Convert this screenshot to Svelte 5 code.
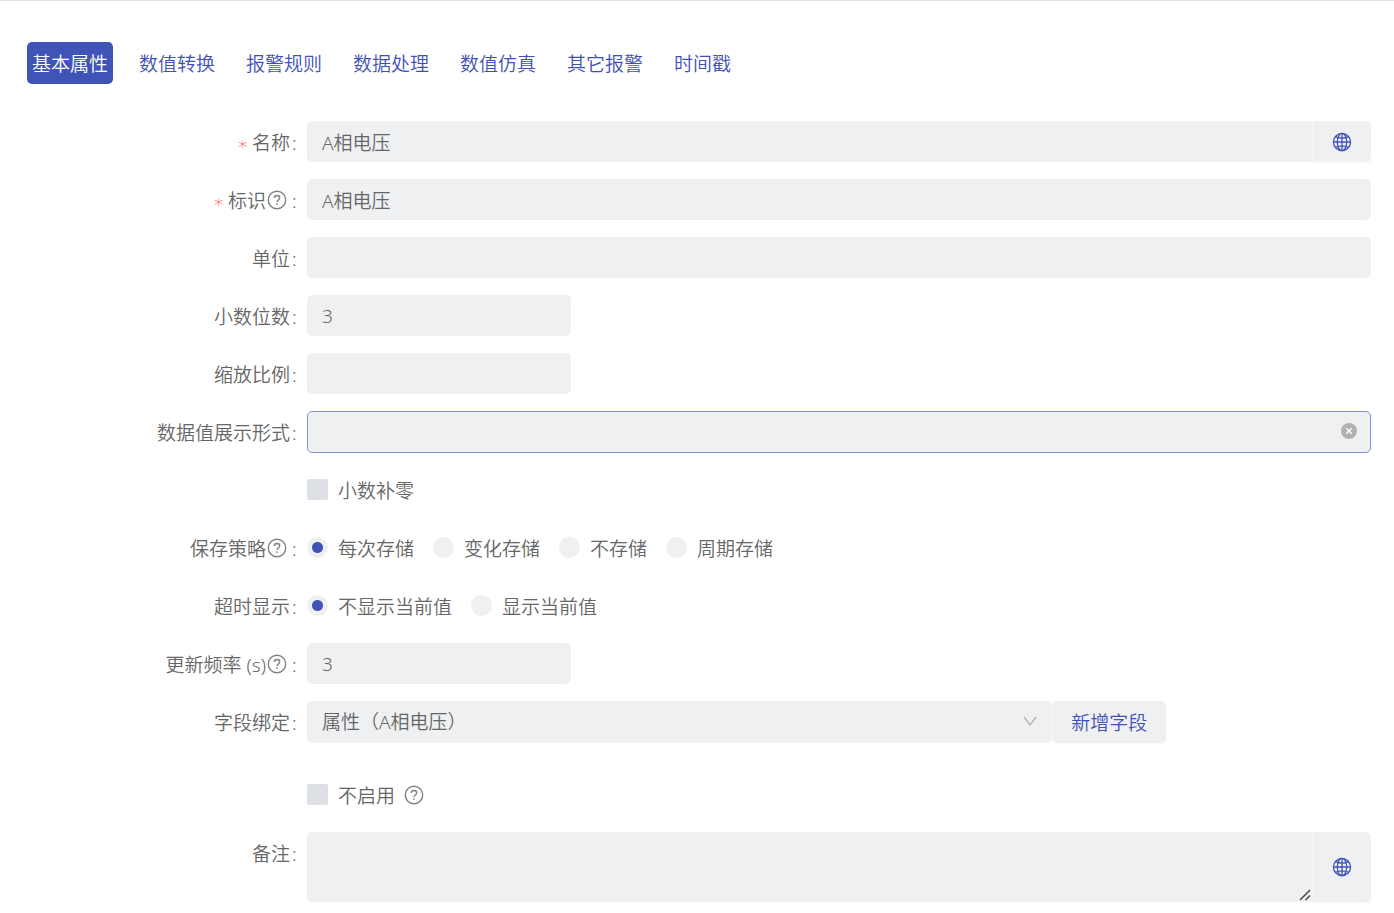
<script>
  const tabs = ['基本属性', '数值转换', '报警规则', '数据处理', '数值仿真', '其它报警', '时间戳'];
  const policies = ['每次存储', '变化存储', '不存储', '周期存储'];
  const timeouts = ['不显示当前值', '显示当前值'];

  let active = $state(0);
  let policy = $state(policies[0]);
  let timeout = $state(timeouts[0]);
  let name = $state('A相电压');
  let ident = $state('A相电压');
  let unit = $state('');
  let decimals = $state('3');
  let scale = $state('');
  let format = $state('');
  let rate = $state('3');
  let field = $state('A');
  let padZero = $state(false);
  let disabled = $state(false);
  let remark = $state('');
</script>

{#snippet help()}
  <svg class="help" viewBox="0 0 20 20" aria-hidden="true">
    <circle cx="10" cy="10" r="8.7" />
    <path d="M7.3 8.1C7.3 6.5 8.5 5.5 10 5.5s2.7 1 2.7 2.5c0 2-2.7 2.1-2.7 4" />
    <circle class="dot" cx="10" cy="14.1" r="0.9" />
  </svg>
{/snippet}

{#snippet globe()}
  <svg class="globe" viewBox="0 0 20 20" aria-hidden="true">
    <circle cx="10" cy="10" r="8.6" />
    <ellipse cx="10" cy="10" rx="4.7" ry="8.6" />
    <path d="M10 1.4v17.2M1.4 10h17.2M3.6 4.6c3.6 2 9.2 2 12.8 0M3.6 15.4c3.6-2 9.2-2 12.8 0" />
  </svg>
{/snippet}

<main>
  <nav>
    {#each tabs as tab, i}
      <button type="button" class="tab" class:active={active === i} onclick={() => (active = i)}>{tab}</button>
    {/each}
  </nav>

  <form>
    <div class="row">
      <label class="label required" for="name">名称</label>
      <div class="group">
        <input class="box joined" id="name" type="text" bind:value={name} />
        <button type="button" class="addon" aria-label="多语言">{@render globe()}</button>
      </div>
    </div>

    <div class="row">
      <label class="label required" for="ident">标识{@render help()}</label>
      <input class="box" id="ident" type="text" bind:value={ident} />
    </div>

    <div class="row">
      <label class="label" for="unit">单位</label>
      <input class="box" id="unit" type="text" bind:value={unit} />
    </div>

    <div class="row">
      <label class="label" for="decimals">小数位数</label>
      <input class="box short" id="decimals" type="text" bind:value={decimals} />
    </div>

    <div class="row">
      <label class="label" for="scale">缩放比例</label>
      <input class="box short" id="scale" type="text" bind:value={scale} />
    </div>

    <div class="row">
      <label class="label" for="format">数据值展示形式</label>
      <div class="wrap">
        <input class="box focused" id="format" type="text" bind:value={format} />
        <button type="button" class="clear" aria-label="清除" onclick={() => (format = '')}>
          <svg viewBox="0 0 16 16" aria-hidden="true">
            <circle cx="8" cy="8" r="8" />
            <path d="M5.3 5.3l5.4 5.4M10.7 5.3l-5.4 5.4" />
          </svg>
        </button>
      </div>
    </div>

    <div class="row">
      <label class="choice alone"><input type="checkbox" bind:checked={padZero} />小数补零</label>
    </div>

    <div class="row">
      <span class="label" id="policy">保存策略{@render help()}</span>
      <div class="choices" role="radiogroup" aria-labelledby="policy">
        {#each policies as item}
          <label class="choice"><input type="radio" name="policy" value={item} bind:group={policy} />{item}</label>
        {/each}
      </div>
    </div>

    <div class="row">
      <span class="label" id="timeout">超时显示</span>
      <div class="choices" role="radiogroup" aria-labelledby="timeout">
        {#each timeouts as item}
          <label class="choice"><input type="radio" name="timeout" value={item} bind:group={timeout} />{item}</label>
        {/each}
      </div>
    </div>

    <div class="row">
      <label class="label" for="rate">更新频率 (s){@render help()}</label>
      <input class="box short" id="rate" type="text" bind:value={rate} />
    </div>

    <div class="row binding">
      <label class="label" for="field">字段绑定</label>
      <div class="group">
        <div class="wrap select">
          <select class="box" id="field" bind:value={field}>
            <option value="A">属性（A相电压）</option>
          </select>
          <svg class="chevron" viewBox="0 0 14 10" aria-hidden="true"><path d="M1 1l6 8 6-8" /></svg>
        </div>
        <button type="button" class="addon add">新增字段</button>
      </div>
    </div>

    <div class="row">
      <label class="choice alone"><input type="checkbox" bind:checked={disabled} />不启用<span class="after">{@render help()}</span></label>
    </div>

    <div class="row top">
      <label class="label" for="remark">备注</label>
      <div class="group">
        <div class="wrap area">
          <textarea class="box joined" id="remark" bind:value={remark}></textarea>
          <svg class="grip" viewBox="0 0 12 12" aria-hidden="true"><path d="M1 11L11 1M6.5 11L11 6.5" /></svg>
        </div>
        <button type="button" class="addon" aria-label="多语言">{@render globe()}</button>
      </div>
    </div>
  </form>
</main>

<style>
  :global(body) {
    background: #fff;
  }

  main,
  button,
  input,
  select,
  textarea {
    font-family: 'Noto Sans', 'Noto Sans CJK SC', sans-serif;
    font-size: 19px;
    font-weight: 350;
    color: #666;
    box-sizing: border-box;
  }

  main {
    border-top: 1px solid #e0e0e0;
    padding: 41px 23px 10px 27px;
    line-height: 28px;
  }

  button {
    border: 0;
    padding: 0;
    background: none;
    cursor: pointer;
  }

  nav {
    display: flex;
    gap: 21px;
    margin-bottom: 37px;
  }

  .tab {
    height: 42px;
    padding: 0 5px;
    border-radius: 5px;
    color: #3f51b5;
    white-space: nowrap;
  }

  .tab.active {
    background: #4054b8;
    color: #fff;
  }

  form {
    display: flex;
    flex-direction: column;
    gap: 16px;
  }

  .row {
    display: grid;
    grid-template-columns: 5fr 19fr;
    min-height: 42px;
  }

  .binding {
    margin-bottom: 15px;
  }

  .label {
    display: flex;
    align-items: center;
    justify-content: flex-end;
    box-sizing: border-box;
    height: 42px;
    padding-top: 2px;
    white-space: pre;
  }

  .label::after {
    content: ':';
    width: 15px;
    margin-left: 2px;
  }

  .required::before {
    content: '∗';
    margin-right: 3px;
    color: #ff4d4f;
    font-family: 'DejaVu Sans', sans-serif;
    font-size: 19px;
  }

  .box {
    width: 100%;
    min-width: 0;
    height: 41px;
    margin: 0;
    padding: 0 15px;
    border: 0;
    border-radius: 5px;
    outline: 0;
    background: #eff0f2;
  }

  .short {
    width: 264px;
  }

  .focused {
    height: 42px;
    border: 1px solid #8190d6;
  }

  .joined {
    flex: 1;
    border-radius: 5px 0 0 5px;
  }

  .group {
    display: flex;
  }

  .wrap {
    position: relative;
  }

  .select {
    width: 70%;
  }

  .area {
    flex: 1;
  }

  select.box {
    height: 42px;
    appearance: none;
  }

  .chevron {
    position: absolute;
    top: 15px;
    right: 15px;
    width: 14px;
    height: 10px;
    fill: none;
    stroke: #b5b7b9;
    stroke-width: 1.5;
    pointer-events: none;
  }

  .clear {
    position: absolute;
    top: 12px;
    right: 14px;
    width: 16px;
    height: 16px;
  }

  .clear svg {
    display: block;
    fill: #b0b1b3;
    stroke: #fff;
    stroke-width: 1.4;
  }

  .clear circle {
    stroke: none;
  }

  .addon {
    display: flex;
    align-items: center;
    justify-content: center;
    width: 59px;
    height: 41px;
    border-left: 1px solid #f4f5f6;
    border-radius: 0 5px 5px 0;
    background: #eff0f2;
    box-shadow: 0 1px 2px rgba(0, 0, 0, 0.03);
    color: #3f51b5;
  }

  .add {
    width: 114px;
    height: 42px;
    border-radius: 5px;
  }

  .globe {
    width: 20px;
    height: 20px;
    fill: none;
    stroke: #4054b8;
    stroke-width: 1.3;
  }

  .help {
    flex: none;
    width: 20px;
    height: 20px;
    margin: 0 3px 2px 1px;
    fill: none;
    stroke: #808080;
    stroke-width: 1.4;
  }

  .help .dot {
    fill: #808080;
    stroke: none;
  }

  .choices {
    display: flex;
    gap: 19px;
  }

  .choice {
    display: flex;
    align-items: center;
    box-sizing: border-box;
    height: 42px;
    padding-top: 2px;
    white-space: nowrap;
  }

  .alone {
    grid-column: 2;
    justify-self: start;
  }

  .choice input {
    appearance: none;
    width: 21px;
    height: 21px;
    margin: 0 10px 4px 0;
    border-radius: 2px;
    background: #dde1e5;
  }

  .choice input[type='checkbox']:checked {
    background: #4054b8;
  }

  .choice input[type='radio'] {
    border-radius: 50%;
    background: #eff0f2;
  }

  .choice input[type='radio']:checked {
    background: radial-gradient(circle, #4054b8 5px, #eff0f2 6px);
  }

  .after {
    display: flex;
    margin-left: 8px;
  }

  .top .box,
  .top .addon {
    height: 70px;
  }

  textarea.box {
    display: block;
    padding: 8px 15px;
    resize: vertical;
  }

  textarea.box::-webkit-resizer {
    background: transparent;
  }

  .grip {
    position: absolute;
    right: 1px;
    bottom: 1px;
    width: 12px;
    height: 12px;
    fill: none;
    stroke: #505050;
    stroke-width: 1.6;
    pointer-events: none;
  }
</style>
